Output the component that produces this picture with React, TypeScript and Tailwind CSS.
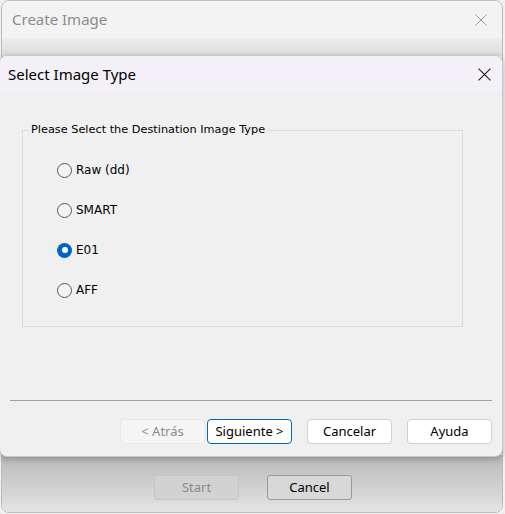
import React from "react";

function Radio({ label, checked }: { label: string; checked?: boolean }) {
  return (
    <div className="flex items-center h-[16px]">
      {checked ? (
        <span className="w-[15px] h-[15px] rounded-full bg-[#0067c0] flex items-center justify-center">
          <span className="w-[6px] h-[6px] rounded-full bg-white" />
        </span>
      ) : (
        <span className="w-[15px] h-[15px] rounded-full border border-[#5a5a5a] bg-[#f3f3f3]" />
      )}
      <span className="ml-[4px] text-[12px] text-black leading-none" style={{ fontFamily: "Tahoma, 'DejaVu Sans', sans-serif" }}>
        {label}
      </span>
    </div>
  );
}

function Btn({ children, variant }: { children: React.ReactNode; variant?: "disabled" | "primary" | "normal" }) {
  const cls =
    variant === "disabled"
      ? "bg-[#f5f5f5] border-[#e8e8e8] text-[#8a8a8a]"
      : variant === "primary"
      ? "bg-white border-[#0067c0] text-black"
      : "bg-white border-[#d0d0d0] text-black";
  return (
    <div className={`w-[85px] h-[25px] rounded-[4px] border flex items-center justify-center text-[13px] ${cls}`}>
      {children}
    </div>
  );
}

function XIcon({ color, size }: { color: string; size: number }) {
  return (
    <svg width={size} height={size} viewBox="0 0 12 12">
      <path d="M0.5 0.5 L11.5 11.5 M11.5 0.5 L0.5 11.5" stroke={color} strokeWidth="1" />
    </svg>
  );
}

export default function App() {
  const font = { fontFamily: "'Noto Sans', 'Open Sans', sans-serif" };
  return (
    <div className="w-[505px] h-[514px] bg-[#f0f0f0] relative overflow-hidden" style={font}>
      {/* outer window */}
      <div className="absolute left-[1px] top-0 w-[502px] h-[513px] rounded-[8px] border border-[#bdbdbd] flex flex-col overflow-hidden">
        <div className="h-[37px] bg-[#f3f3f3] flex items-center justify-between pl-[10px] pr-[15px]">
          <span className="text-[15px] text-[#8c8c8c]">Create Image</span>
          <XIcon color="#9a9a9a" size={12} />
        </div>
        <div className="h-[18px] bg-gradient-to-b from-[#eeeeee] to-[#dcdcdc]" />
        <div className="flex-1" />
        <div className="h-[57px] bg-gradient-to-b from-[#b9b9b9] to-[#e4e4e4] flex items-start justify-center gap-[28px] pt-[20px] pl-[2px]">
          <div className="w-[85px] h-[25px] rounded-[3px] border border-[#c4c4c4] bg-[#d2d2d2] flex items-center justify-center text-[13px] text-[#8a8a8a]">
            Start
          </div>
          <div className="w-[85px] h-[25px] rounded-[3px] border border-[#9a9a9a] bg-[#d8d8d8] flex items-center justify-center text-[13px] text-black">
            Cancel
          </div>
        </div>
      </div>

      {/* modal dialog */}
      <div className="absolute left-[-1px] top-[55px] w-[504px] h-[402px] rounded-[8px] border border-[#c8c8c8] bg-[#f0f0f0] flex flex-col overflow-hidden shadow-[0_2px_6px_rgba(0,0,0,0.25)]">
        <div className="h-[37px] bg-[#f4f0f7] flex items-center justify-between pl-[8px] pr-[11px] shrink-0">
          <span className="text-[15px] text-black">Select Image Type</span>
          <XIcon color="#1a1a1a" size={13} />
        </div>
        <div className="pt-[37px] pl-[22px]">
          <div className="w-[441px] h-[197px] border border-[#dcdcdc] relative">
            <span
              className="absolute -top-[8px] left-[6px] px-[2px] bg-[#f0f0f0] text-[11.3px] leading-[14px] text-black"
              style={{ fontFamily: "Tahoma, 'DejaVu Sans', sans-serif" }}
            >
              Please Select the Destination Image Type
            </span>
            <div className="pt-[31px] pl-[34px] flex flex-col gap-[24px]">
              <Radio label="Raw (dd)" />
              <Radio label="SMART" />
              <Radio label="E01" checked />
              <Radio label="AFF" />
            </div>
          </div>
        </div>
        <div className="mt-[73px] ml-[10px] w-[482px] h-px bg-[#a0a0a0]" />
        <div className="mt-[18px] flex pl-[120px]">
          <Btn variant="disabled">&lt; Atrás</Btn>
          <div className="w-[2px]" />
          <Btn variant="primary">Siguiente &gt;</Btn>
          <div className="w-[15px]" />
          <Btn>Cancelar</Btn>
          <div className="w-[15px]" />
          <Btn>Ayuda</Btn>
        </div>
      </div>
    </div>
  );
}
